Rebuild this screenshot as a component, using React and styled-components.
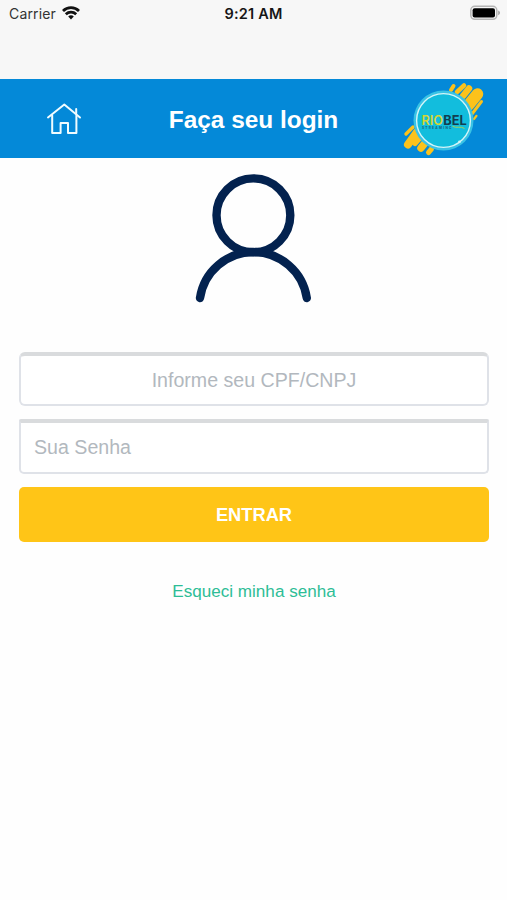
import React from 'react';
import styled, { createGlobalStyle } from 'styled-components';

const GlobalStyle = createGlobalStyle`
  * {
    box-sizing: border-box;
  }

  body {
    margin: 0;
    background: #fefefe;
    font-family: 'Liberation Sans', Arial, sans-serif;
  }
`;

const Screen = styled.main`
  width: 100%;
  min-height: 900px;
  background: #fefefe;
`;

const StatusBar = styled.div`
  display: grid;
  grid-template-columns: 1fr auto 1fr;
  align-items: start;
  height: 79px;
  padding: 5px 6px 0 9px;
  background: #f7f7f7;
  color: #161616;
  font-family: Inter, sans-serif;
  font-size: 14px;
  line-height: 18px;
`;

const Carrier = styled.div`
  display: flex;
  align-items: center;
  gap: 6px;
  color: #333;
  letter-spacing: 0.15px;

  svg {
    margin-top: -2px;
    color: #111;
  }
`;

const Clock = styled.div`
  margin-right: 3px;
  font-size: 14.5px;
  font-weight: 600;
  letter-spacing: 0.2px;
`;

const Battery = styled.div`
  display: flex;
  justify-content: flex-end;
`;

const Header = styled.header`
  display: grid;
  grid-template-columns: 128px 1fr 128px;
  align-items: center;
  justify-items: center;
  height: 79px;
  background: #0489d8;
  color: #fff;
`;

const HomeButton = styled.button`
  display: flex;
  padding: 0;
  border: 0;
  background: none;
  color: #f0fcff;
`;

const Title = styled.h1`
  margin: 0;
  padding-top: 2px;
  font-size: 24.4px;
  line-height: 30px;
  font-weight: bold;
  white-space: nowrap;
`;

const Avatar = styled.div`
  display: flex;
  justify-content: center;
  height: 194px;
  padding: 12px 2px 0 0;
`;

const Form = styled.form`
  display: flex;
  flex-direction: column;
  padding: 0 18px 0 19px;
`;

const Field = styled.input`
  height: ${({ $height }) => $height}px;
  margin-bottom: 13px;
  padding: 0 13px;
  border: 2px solid #dfe2e8;
  border-top: 4px solid #d9dbdd;
  border-radius: ${({ $radius }) => $radius};
  background: #fff;
  font-family: inherit;
  font-size: 19.6px;
  text-align: ${({ $align }) => $align};
  outline: none;

  &::placeholder {
    color: #b2b8be;
    opacity: 1;
  }
`;

const SubmitButton = styled.button`
  height: 55px;
  padding: 0;
  border: 0;
  border-radius: 5px;
  background: #ffc517;
  color: #fff;
  font-family: inherit;
  font-size: 18.3px;
  font-weight: bold;
`;

const ForgotLink = styled.a`
  align-self: center;
  margin-top: 40px;
  color: #2dbd96;
  font-size: 17.1px;
  line-height: 20px;
  white-space: nowrap;
`;

const WifiIcon = () => (
  <svg width="18" height="14" viewBox="0 0 18 14" fill="none" stroke="currentColor" strokeWidth="2.8">
    <path d="M1 4.9C5.5 0.5 12.5 0.5 17 4.9" />
    <path d="M3.8 8.2C6.8 5.4 11.2 5.4 14.2 8.2" />
    <path d="M6.2 10.4C7.8 9 10.2 9 11.8 10.4L9 13.4Z" fill="currentColor" stroke="none" />
  </svg>
);

const BatteryIcon = () => (
  <svg width="31" height="16" viewBox="0 0 31 16">
    <rect x="0.8" y="1.3" width="26" height="13" rx="4" fill="#f7f7f7" stroke="#b5b5b5" strokeWidth="1.5" />
    <rect x="2.6" y="3.2" width="22.4" height="9.4" rx="2" fill="#000" />
    <path d="M28.2 5.6C30.6 6.6 30.6 9.2 28.2 10.2Z" fill="#a5a5a5" />
  </svg>
);

const HomeIcon = () => (
  <svg width="36" height="34" viewBox="0 0 36 34" fill="none" stroke="currentColor" strokeWidth="2" strokeLinecap="round" strokeLinejoin="round">
    <path d="M2 15.5L18.3 2.5L34 15.5" />
    <path d="M30.2 11.5V7" />
    <path d="M6.2 13.5V31H14.6V21H22V31H30.4V13.5" />
  </svg>
);

const UserIcon = () => (
  <svg width="118" height="134" viewBox="194 170 118 134" fill="none" stroke="#03224f" strokeWidth="8.4" strokeLinecap="round">
    <circle cx="253.4" cy="215.3" r="36.9" />
    <path d="M200 298A54 54 0 0 1 306.8 298" />
  </svg>
);

const Logo = () => (
  <svg width="82" height="76" viewBox="402 81 82 76">
    <g stroke="#fcc21b" strokeLinecap="round" fill="none">
      <path d="M451 90L453.5 86" strokeWidth="4" />
      <path d="M457 92L464 85.5" strokeWidth="4.5" />
      <path d="M463 96L469 88.5" strokeWidth="6.5" />
      <path d="M468.5 105L477.5 94" strokeWidth="11.5" />
      <path d="M472 114L481.5 101.5" strokeWidth="3" />
      <path d="M474 119L476.5 115.8" strokeWidth="2.2" />
      <path d="M406 134L413 127" strokeWidth="3.4" />
      <path d="M408 144.5L417 132" strokeWidth="8" />
      <path d="M415 143L422 135" strokeWidth="6" />
      <path d="M421 148L425 143" strokeWidth="7.5" />
      <path d="M428.5 152.5L431.5 149" strokeWidth="5" />
    </g>
    <circle cx="443.5" cy="120.5" r="30" fill="#39c3e5" />
    <circle cx="443.5" cy="120.5" r="26.9" fill="#12bddd" stroke="#d5f5f8" strokeWidth="1.4" />
    <text x="421.5" y="125.3" fontFamily="Inter, sans-serif" fontSize="13.2" fontWeight="600" fill="#d5d536" textLength="21.5" lengthAdjust="spacingAndGlyphs">RIO</text>
    <text x="443.2" y="125.3" fontFamily="Inter, sans-serif" fontSize="13.2" fontWeight="700" fill="#123e50" textLength="23.5" lengthAdjust="spacingAndGlyphs">BEL</text>
    <text x="422" y="129" fontFamily="Inter, sans-serif" fontSize="3.2" fontWeight="700" fill="#155f76" textLength="29.5">STREAMING</text>
    <path d="M452.5 126.3C456 128.5 461 125.8 464.5 128.5" fill="none" stroke="#a9cf55" strokeWidth="1" />
    <circle cx="459.5" cy="141.8" r="1.4" fill="#d5f5f8" />
  </svg>
);

const App = () => {
  return (
    <>
      <GlobalStyle />
      <Screen>
        <StatusBar>
          <Carrier>
            <span>Carrier</span>
            <WifiIcon />
          </Carrier>
          <Clock>9:21 AM</Clock>
          <Battery>
            <BatteryIcon />
          </Battery>
        </StatusBar>
        <Header>
          <HomeButton type="button" aria-label="Início">
            <HomeIcon />
          </HomeButton>
          <Title>Faça seu login</Title>
          <Logo />
        </Header>
        <Avatar>
          <UserIcon />
        </Avatar>
        <Form>
          <Field type="text" placeholder="Informe seu CPF/CNPJ" $align="center" $radius="6px" $height={54} />
          <Field type="password" placeholder="Sua Senha" $align="left" $radius="2px 2px 5px 5px" $height={55} />
          <SubmitButton type="button">ENTRAR</SubmitButton>
          <ForgotLink>Esqueci minha senha</ForgotLink>
        </Form>
      </Screen>
    </>
  );
};

export default App;
